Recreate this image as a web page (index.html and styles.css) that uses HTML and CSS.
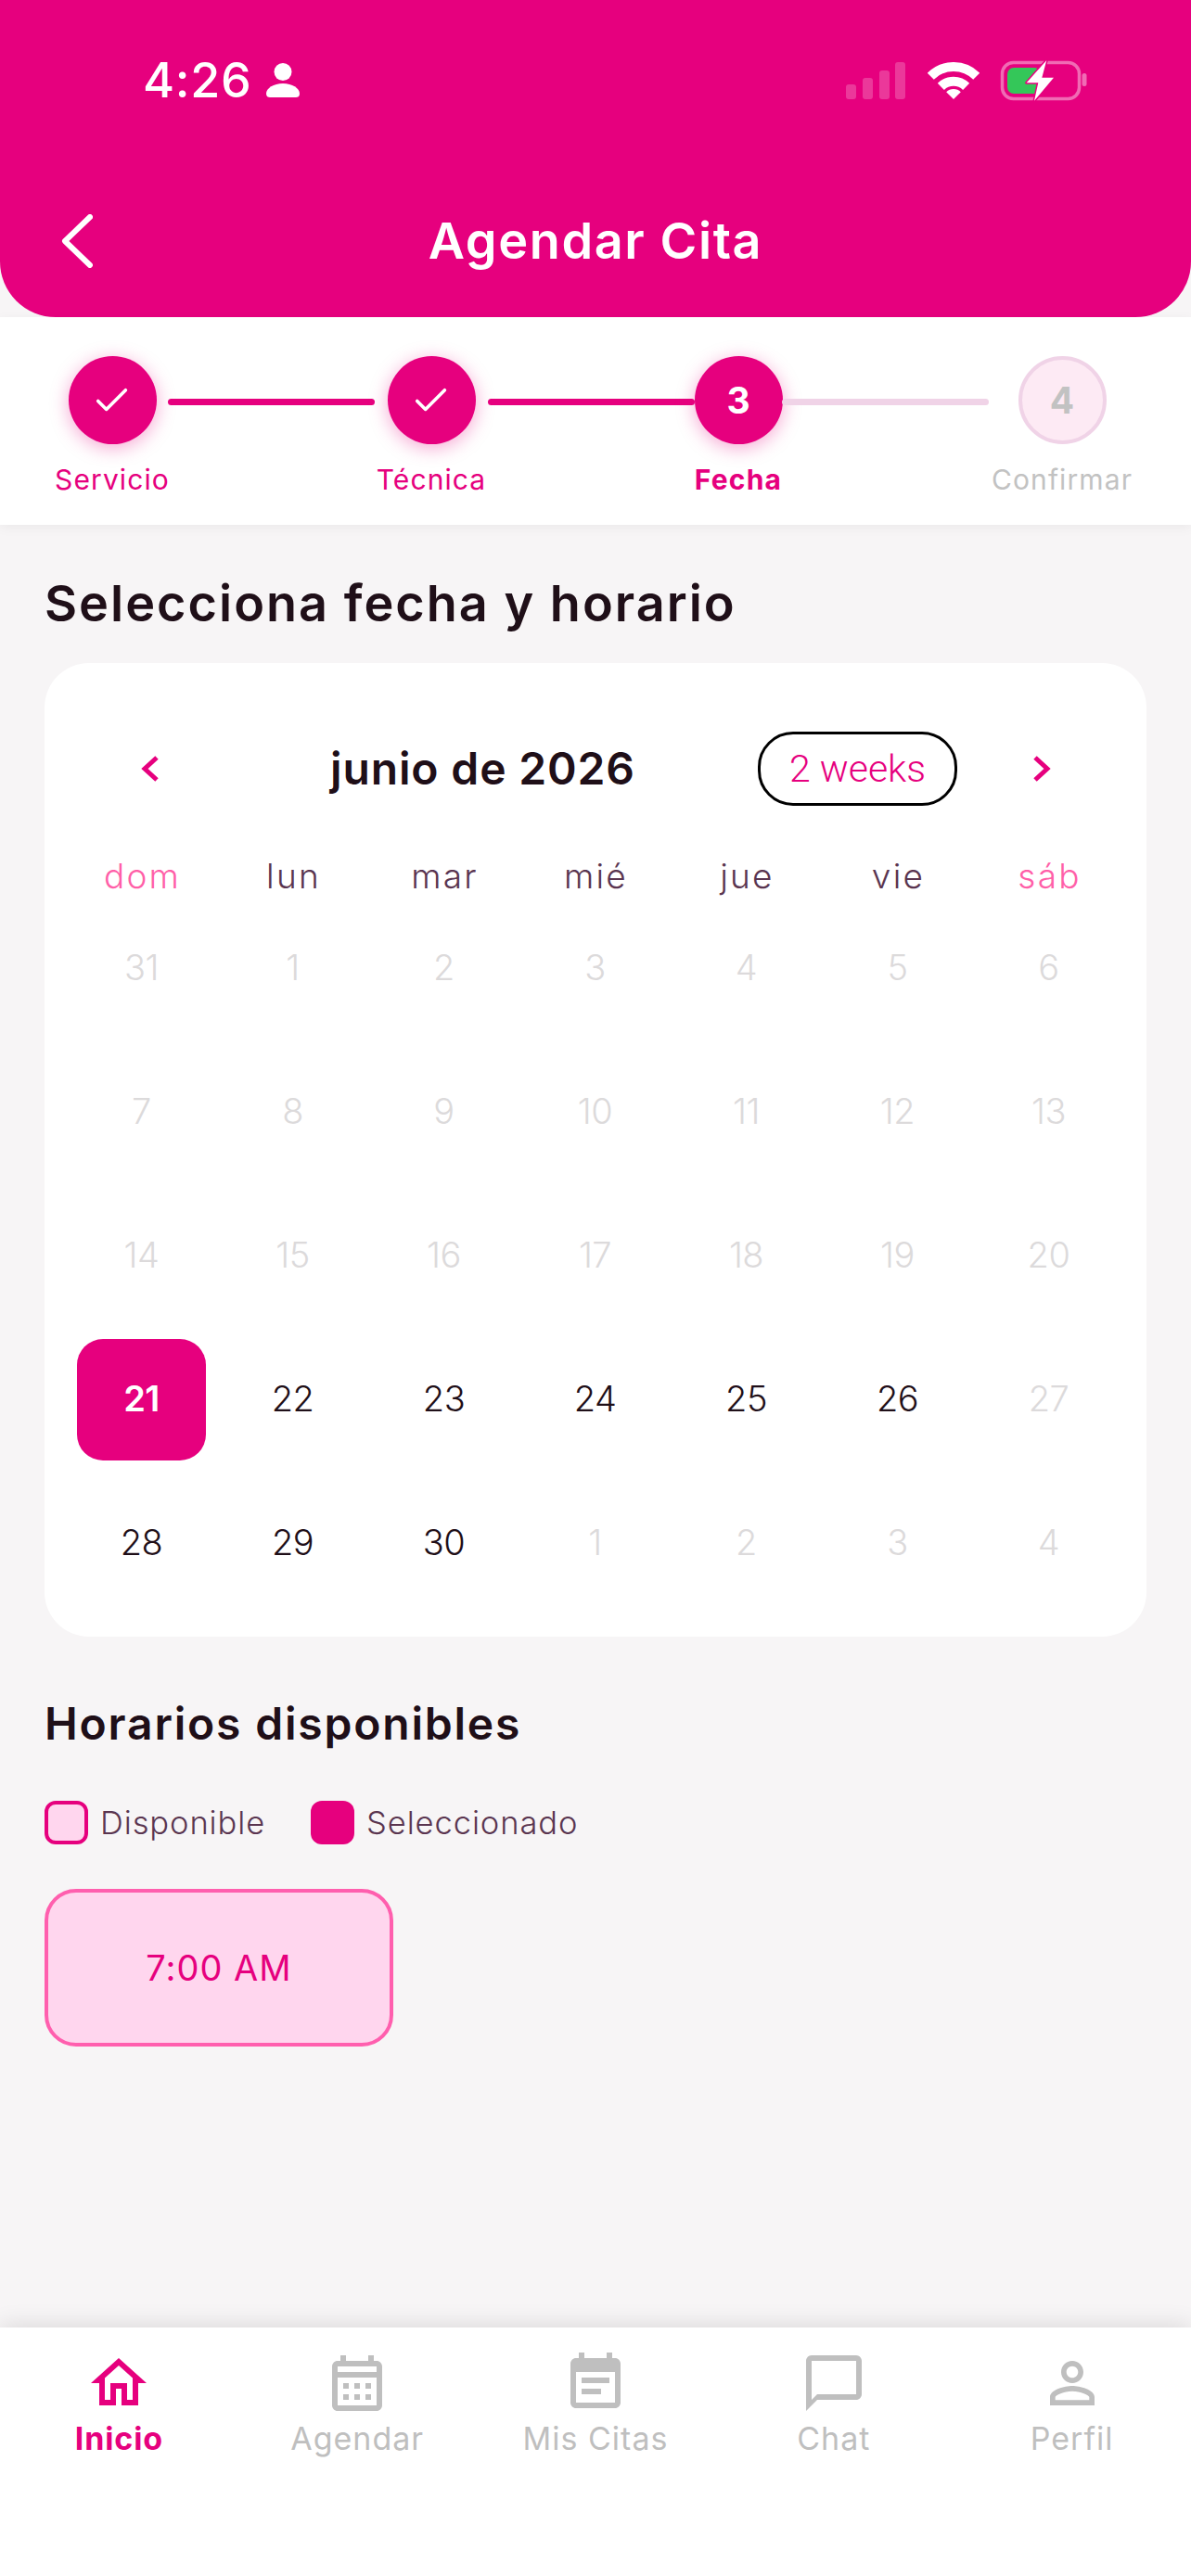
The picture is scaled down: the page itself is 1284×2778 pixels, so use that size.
FILE: index.html
```html
<!DOCTYPE html>
<html lang="es">
<head>
<meta charset="utf-8">
<title>Agendar Cita</title>
<link rel="stylesheet" href="styles.css">
</head>
<body>
<div class="app">
  <header class="header">
    <div class="status">
      <div class="status-left">
        <span class="time">4:26</span>
        <svg class="status-person" viewBox="0 0 36 38"><circle cx="18" cy="9.5" r="9.5" fill="#fff"/><path fill="#fff" d="M0 33C0 27 8 22 18 22s18 5 18 11c0 3-2 4-4 4H4c-2 0-4-1-4-4z"/></svg>
      </div>
      <div class="status-right">
        <svg class="signal" viewBox="0 0 64 40"><g fill="#fff" fill-opacity=".22"><rect x="0" y="24" width="11" height="16" rx="3"/><rect x="18" y="17" width="11" height="23" rx="3"/><rect x="36" y="9" width="11" height="31" rx="3"/><rect x="53" y="0" width="11" height="40" rx="3"/></g></svg>
        <svg class="wifi" viewBox="0 0 56 40"><g fill="none" stroke="#fff" stroke-width="10"><path d="M3.250 15.250A35 35 0 0 1 52.750 15.250"/><path d="M14.350 26.350A19.300 19.300 0 0 1 41.650 26.350"/></g><path fill="#fff" d="M28 40 20.200 32.200A11 11 0 0 1 35.800 32.200z"/></svg>
        <svg class="battery" viewBox="0 0 96 46"><rect x="2.500" y="3.500" width="83" height="39" rx="12" fill="none" stroke="#fff" stroke-opacity=".42" stroke-width="3.500"/><rect x="88.500" y="15" width="5" height="14" rx="2.500" fill="#fff" fill-opacity=".42"/><rect x="8" y="9" width="36" height="28" rx="7" fill="#34c759"/><path fill="#fff" stroke="#e6007e" stroke-width="3" paint-order="stroke" stroke-linejoin="round" d="M50.300 1 28.700 25.300H41.300L37 44.700 58 19.700H45.300z"/></svg>
      </div>
    </div>
    <div class="titlebar">
      <svg class="back" viewBox="0 0 35 58"><path d="M32 3 5 29 32 55" fill="none" stroke="#fff" stroke-width="6" stroke-linecap="round" stroke-linejoin="round"/></svg>
      <h1 class="title">Agendar Cita</h1>
      <span></span>
    </div>
  </header>

  <section class="stepper">
    <div class="step step-1">
      <div class="dot dot-on"><svg class="check" viewBox="0 0 40 32"><path d="M3 17 13 27 36 4" fill="none" stroke="#fff" stroke-width="4" stroke-linecap="round" stroke-linejoin="round"/></svg></div>
      <span class="step-label">Servicio</span>
    </div>
    <div class="line line-on"></div>
    <div class="step step-2">
      <div class="dot dot-on"><svg class="check" viewBox="0 0 40 32"><path d="M3 17 13 27 36 4" fill="none" stroke="#fff" stroke-width="4" stroke-linecap="round" stroke-linejoin="round"/></svg></div>
      <span class="step-label">Técnica</span>
    </div>
    <div class="line line-on"></div>
    <div class="step step-3">
      <div class="dot dot-on">3</div>
      <span class="step-label step-label-active">Fecha</span>
    </div>
    <div class="line"></div>
    <div class="step step-4">
      <div class="dot dot-off">4</div>
      <span class="step-label step-label-off">Confirmar</span>
    </div>
  </section>

  <main class="main">
    <h2 class="heading">Selecciona fecha y horario</h2>
    <section class="card">
      <div class="cal-head">
        <svg class="chev chev-prev" viewBox="0 0 20 30"><path d="M17 3 4 15 17 27" fill="none" stroke="#e6007e" stroke-width="5"/></svg>
        <div class="month">junio de 2026</div>
        <div class="format">2 weeks</div>
        <svg class="chev chev-next" viewBox="0 0 20 30"><path d="M3 3 16 15 3 27" fill="none" stroke="#e6007e" stroke-width="5"/></svg>
      </div>
      <div class="weekdays">
        <span class="wd wd-end">dom</span><span class="wd">lun</span><span class="wd">mar</span><span class="wd">mié</span><span class="wd">jue</span><span class="wd">vie</span><span class="wd wd-end">sáb</span>
      </div>
      <div class="days">
        <span class="day off">31</span><span class="day off">1</span><span class="day off">2</span><span class="day off">3</span><span class="day off">4</span><span class="day off">5</span><span class="day off">6</span>
        <span class="day off">7</span><span class="day off">8</span><span class="day off">9</span><span class="day off">10</span><span class="day off">11</span><span class="day off">12</span><span class="day off">13</span>
        <span class="day off">14</span><span class="day off">15</span><span class="day off">16</span><span class="day off">17</span><span class="day off">18</span><span class="day off">19</span><span class="day off">20</span>
        <span class="day selected">21</span><span class="day">22</span><span class="day">23</span><span class="day">24</span><span class="day">25</span><span class="day">26</span><span class="day off">27</span>
        <span class="day">28</span><span class="day">29</span><span class="day">30</span><span class="day off">1</span><span class="day off">2</span><span class="day off">3</span><span class="day off">4</span>
      </div>
    </section>

    <h3 class="subheading">Horarios disponibles</h3>
    <div class="legend">
      <span class="swatch swatch-free"></span><span class="legend-text">Disponible</span>
      <span class="swatch swatch-picked"></span><span class="legend-text">Seleccionado</span>
    </div>
    <div class="slot">7:00 AM</div>
  </main>

  <nav class="nav">
    <div class="nav-item nav-active">
      <svg class="nav-icon" viewBox="0 0 24 24"><path d="M12 5.690l5 4.500V18h-2v-6H9v6H7v-7.810l5-4.500M12 3 2 12h3v8h6v-6h2v6h6v-8h3L12 3z"/></svg>
      <span class="nav-label">Inicio</span>
    </div>
    <div class="nav-item">
      <svg class="nav-icon" viewBox="0 0 24 24"><path d="M19 4h-1V2h-2v2H8V2H6v2H5c-1.110 0-1.990.9-1.990 2L3 20c0 1.100.89 2 2 2h14c1.100 0 2-.9 2-2V6c0-1.100-.9-2-2-2zm0 16H5V10h14v10zm0-12H5V6h14v2zM9 14H7v-2h2v2zm4 0h-2v-2h2v2zm4 0h-2v-2h2v2zm-8 4H7v-2h2v2zm4 0h-2v-2h2v2zm4 0h-2v-2h2v2z"/></svg>
      <span class="nav-label">Agendar</span>
    </div>
    <div class="nav-item">
      <svg class="nav-icon" viewBox="0 0 24 24"><path d="M17 10H7v2h10v-2zm2-7h-1V1h-2v2H8V1H6v2H5c-1.110 0-1.990.9-1.990 2L3 19c0 1.100.89 2 2 2h14c1.100 0 2-.9 2-2V5c0-1.100-.9-2-2-2zm0 16H5V8h14v11zm-5-5H7v2h7v-2z"/></svg>
      <span class="nav-label">Mis Citas</span>
    </div>
    <div class="nav-item">
      <svg class="nav-icon" viewBox="0 0 24 24"><path d="M20 2H4c-1.100 0-2 .9-2 2v18l4-4h14c1.100 0 2-.9 2-2V4c0-1.100-.9-2-2-2zm0 14H6l-2 2V4h16v12z"/></svg>
      <span class="nav-label">Chat</span>
    </div>
    <div class="nav-item">
      <svg class="nav-icon" viewBox="0 0 24 24"><path d="M12 5.900c1.160 0 2.100.94 2.100 2.100s-.94 2.100-2.100 2.100S9.900 9.160 9.900 8s.94-2.100 2.100-2.100m0 9c2.970 0 6.100 1.460 6.100 2.100v1.100H5.900V17c0-.64 3.130-2.100 6.100-2.100M12 4C9.790 4 8 5.790 8 8s1.790 4 4 4 4-1.790 4-4-1.790-4-4-4zm0 9c-2.670 0-8 1.340-8 4v3h16v-3c0-2.660-5.330-4-8-4z"/></svg>
      <span class="nav-label">Perfil</span>
    </div>
  </nav>
</div>
</body>
</html>
```
FILE: styles.css
```css
* { box-sizing: border-box; margin: 0; padding: 0; }
html, body { height: 100%; }
body {
  background: #f7f5f6;
  font-family: Inter, "Noto Sans", sans-serif;
  color: #1f0f18;
}
.app { height: 2778px; display: flex; flex-direction: column; overflow: hidden; }

.header {
  height: 342px;
  background: #e6007e;
  border-radius: 0 0 60px 60px;
  flex: none;
  padding-top: 56px;
}
.status {
  height: 62px;
  display: flex;
  justify-content: space-between;
  align-items: center;
  padding: 0 112px 0 154px;
}
.status-left { display: flex; align-items: center; gap: 15px; }
.time { color: #fff; font-size: 52px; font-weight: 500; line-height: 62px; letter-spacing: 0.7px; }
.status-person { width: 36px; height: 38px; }
.status-right { display: flex; align-items: center; }
.signal { width: 64px; height: 40px; }
.wifi { width: 56px; height: 40px; margin-left: 24px; }
.battery { width: 96px; height: 46px; margin-left: 22px; margin-right: -2px; }

.titlebar {
  height: 90px;
  margin-top: 97px;
  display: grid;
  grid-template-columns: 1fr auto 1fr;
  align-items: center;
  padding-left: 65px;
  padding-right: 65px;
}
.back { width: 35px; height: 58px; }
.title { color: #fff; font-size: 54px; font-weight: 600; line-height: 90px; letter-spacing: 1.6px; }

.stepper {
  height: 224px;
  flex: none;
  background: #fff;
  box-shadow: 0 3px 12px rgba(0, 0, 0, .05);
  display: flex;
  padding: 42px 60px 0 61px;
  position: relative;
}
.step { display: flex; flex-direction: column; align-items: center; flex: none; }
.step-1 { width: 120px; }
.step-2 { width: 122px; }
.step-3 { width: 94px; }
.step-4 { width: 158px; }
.dot {
  width: 95px;
  height: 95px;
  flex: none;
  border-radius: 50%;
  display: flex;
  align-items: center;
  justify-content: center;
  font-size: 39px;
  font-weight: 700;
}
.dot-on { background: #e6007e; color: #fff; box-shadow: 0 4px 20px rgba(230, 0, 126, .35); }
.dot-off { background: #fdeaf4; color: #c2c2c2; border: 4px solid #f0d3e7; }
.check { width: 36px; height: 29px; }
.step-label { margin-top: 16px; font-size: 30px; line-height: 44px; white-space: nowrap; color: #e6007e; letter-spacing: 1.1px; }
.step-label-active { font-weight: 700; letter-spacing: 1.2px; }
.step-label-off { color: #c2c2c2; }
.line { flex: 1; height: 7px; margin-top: 46px; border-radius: 4px; background: #f0d3e7; }
.line-on { background: #e6007e; }

.main { flex: 1; padding: 49px 48px 0; }
.heading { font-size: 54px; font-weight: 600; line-height: 72px; letter-spacing: 2px; }
.card {
  margin-top: 28px;
  height: 1050px;
  background: #fff;
  border-radius: 48px;
  padding: 74px 24px 0 23px;
}
.cal-head { display: flex; align-items: center; height: 80px; padding: 0 79px 0 81px; }
.chev { width: 20px; height: 30px; flex: none; }
.chev-prev { margin-right: 52px; }
.chev-next { margin-left: 81px; }
.month { flex: 1; text-align: center; font-size: 48px; font-weight: 600; line-height: 60px; letter-spacing: 0.85px; }
.format {
  width: 215px;
  height: 80px;
  flex: none;
  border: 3px solid #000;
  border-radius: 38px;
  display: flex;
  align-items: center;
  justify-content: center;
  font-family: Roboto, sans-serif;
  font-size: 41px;
  font-weight: 300;
  color: #e6007e;
}
.weekdays { display: grid; grid-template-columns: repeat(7, 163px); margin-top: 51px; margin-bottom: 9px; }
.wd { text-align: center; font-size: 37px; line-height: 50px; letter-spacing: 2.2px; padding-left: 2px; font-weight: 350; color: #5a3550; }
.wd-end { color: #ff5fa8; }
.days { display: grid; grid-template-columns: repeat(7, 163px); grid-auto-rows: 131px; row-gap: 24px; }
.day {
  display: flex;
  align-items: center;
  justify-content: center;
  font-size: 38px;
  font-weight: 350;
  letter-spacing: -0.5px;
  padding-bottom: 3px;
  color: #1f0f18;
  border-radius: 28px;
  margin: 0 12px;
}
.day.off { color: #dcdadb; }
.day.selected { background: #e6007e; color: #fff; font-weight: 600; }

.subheading { margin-top: 62px; font-size: 48px; font-weight: 600; line-height: 64px; letter-spacing: 1.8px; }
.legend { margin-top: 51px; display: flex; align-items: center; height: 47px; }
.swatch { width: 47px; height: 47px; border-radius: 12px; flex: none; }
.swatch-free { background: #ffd6ee; border: 4px solid #e6007e; }
.swatch-picked { background: #e6007e; margin-left: 49px; }
.legend-text { margin-left: 13px; font-size: 34.5px; color: #5a3550; line-height: 47px; letter-spacing: 0.9px; font-weight: 350; }
.slot {
  margin-top: 48px;
  width: 376px;
  height: 170px;
  border: 4px solid #ff5fae;
  border-radius: 34px;
  background: #ffd6ee;
  color: #e6007e;
  font-size: 38px;
  font-weight: 400;
  letter-spacing: 1px;
  display: flex;
  align-items: center;
  justify-content: center;
}

.nav {
  height: 268px;
  flex: none;
  background: #fff;
  box-shadow: 0 -2px 24px rgba(0, 0, 0, .12);
  display: grid;
  grid-template-columns: repeat(5, 1fr);
  padding-top: 24px;
  position: relative;
}
.nav-item { display: flex; flex-direction: column; align-items: center; color: #bfbfbf; }
.nav-icon { width: 72px; height: 72px; fill: currentColor; }
.nav-label { font-size: 34px; line-height: 48px; letter-spacing: 1px; }
.nav-active { color: #e6007e; }
.nav-active .nav-label { font-weight: 700; letter-spacing: 0.9px; }
```
